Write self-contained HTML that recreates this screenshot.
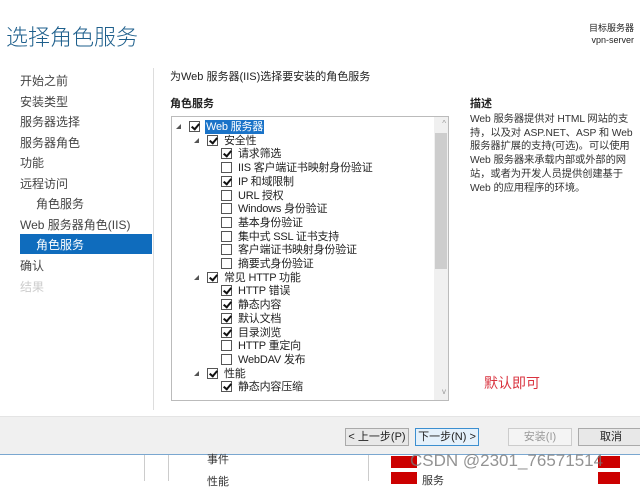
<!DOCTYPE html>
<html><head><meta charset="utf-8"><style>
*{margin:0;padding:0;box-sizing:border-box}
body{width:640px;height:481px;overflow:hidden;background:#fff;font-family:"Liberation Sans","Noto Sans CJK SC",sans-serif;font-size:11px;color:#333;position:relative}
.a{position:absolute;white-space:nowrap}
.nav{font-size:12px;color:#444}
.row{position:absolute;height:14px;line-height:14px;font-size:11px;color:#222;white-space:nowrap;letter-spacing:-0.2px}
.cb{position:absolute;width:11px;height:11px;border:1px solid #555;background:#fff;top:1px}
.cb.c::after{content:"";position:absolute;left:3px;top:0px;width:3px;height:6px;border:solid #111;border-width:0 2px 2px 0;transform:rotate(40deg)}
.ar{position:absolute;top:4px;width:0;height:0;border-left:5px solid transparent;border-bottom:5px solid #555}
.btn{position:absolute;height:18px;top:428px;border:1px solid #aaa;background:#e8e8e8;font-size:11px;text-align:center;line-height:16px;color:#222}
</style></head><body>
<div class="a" style="left:6px;top:20px;font-size:22px;color:#1e5f8c;font-weight:300">选择角色服务</div>
<div class="a" style="right:6px;top:22px;font-size:9px;color:#222;text-align:right;line-height:12px">目标服务器<br>vpn-server</div>

<div class="a nav" style="left:20px;top:72px">开始之前</div>
<div class="a nav" style="left:20px;top:93px">安装类型</div>
<div class="a nav" style="left:20px;top:113px">服务器选择</div>
<div class="a nav" style="left:20px;top:134px">服务器角色</div>
<div class="a nav" style="left:20px;top:154px">功能</div>
<div class="a nav" style="left:20px;top:175px">远程访问</div>
<div class="a nav" style="left:36px;top:195px">角色服务</div>
<div class="a nav" style="left:20px;top:216px">Web 服务器角色(IIS)</div>
<div class="a" style="left:20px;top:234px;width:132px;height:20px;background:#0f6cbd"></div>
<div class="a nav" style="left:36px;top:236px;color:#fff">角色服务</div>
<div class="a nav" style="left:20px;top:257px">确认</div>
<div class="a nav" style="left:20px;top:278px;color:#ccc">结果</div>
<div class="a" style="left:153px;top:68px;width:1px;height:342px;background:#ddd"></div>

<div class="a" style="left:170px;top:68px;font-size:11px;color:#222">为Web 服务器(IIS)选择要安装的角色服务</div>
<div class="a" style="left:170px;top:95px;font-size:11px;font-weight:bold;color:#222">角色服务</div>
<div class="a" style="left:470px;top:95px;font-size:11px;font-weight:bold;color:#222">描述</div>
<div class="a" style="left:470px;top:113px;font-size:10.3px;line-height:13.7px;color:#333;letter-spacing:-0.1px">Web 服务器提供对 HTML 网站的支<br>持，以及对 ASP.NET、ASP 和 Web<br>服务器扩展的支持(可选)。可以使用<br>Web 服务器来承载内部或外部的网<br>站，或者为开发人员提供创建基于<br>Web 的应用程序的环境。</div>

<div class="a" style="left:171px;top:116px;width:278px;height:285px;border:1px solid #bbb;background:#fff;overflow:hidden">
 <div class="a" style="right:0;top:0;width:14px;height:283px;background:#f0f0f0"></div>
 <div class="a" style="right:2px;top:2px;font-size:8px;color:#999">^</div>
 <div class="a" style="right:1px;top:16px;width:12px;height:136px;background:#cdcdcd"></div>
 <div class="a" style="right:2px;top:270px;font-size:8px;color:#999">v</div>
</div>
<div id="tree"></div>
<script>
var rows=[[0,1,1,"Web 服务器"],[1,1,1,"安全性"],[2,0,1,"请求筛选"],[2,0,0,"IIS 客户端证书映射身份验证"],[2,0,1,"IP 和域限制"],[2,0,0,"URL 授权"],[2,0,0,"Windows 身份验证"],[2,0,0,"基本身份验证"],[2,0,0,"集中式 SSL 证书支持"],[2,0,0,"客户端证书映射身份验证"],[2,0,0,"摘要式身份验证"],[1,1,1,"常见 HTTP 功能"],[2,0,1,"HTTP 错误"],[2,0,1,"静态内容"],[2,0,1,"默认文档"],[2,0,1,"目录浏览"],[2,0,0,"HTTP 重定向"],[2,0,0,"WebDAV 发布"],[1,1,1,"性能"],[2,0,1,"静态内容压缩"]];
var h="";
rows.forEach(function(r,i){var y=120+i*13.7;var x=[176,194,221][r[0]];
if(r[1])h+='<div class="ar" style="left:'+x+'px;top:'+(y+4)+'px;position:absolute"></div>';
var cx=x+13; if(r[0]==2)cx=x;
h+='<div class="cb'+(r[2]?' c':'')+'" style="left:'+cx+'px;top:'+(y+1)+'px"></div>';
var tx=cx+17;
if(i==0)h+='<div class="row" style="left:'+(tx-1)+'px;top:'+y+'px;background:#1a73c8;color:#fff;padding:0 1px">'+r[3]+'</div>';
else h+='<div class="row" style="left:'+tx+'px;top:'+y+'px">'+r[3]+'</div>';});
document.getElementById("tree").innerHTML=h;
</script>
<div class="a" style="left:484px;top:373px;font-size:14px;color:#d9333f">默认即可</div>

<div class="a" style="left:0;top:416px;width:640px;height:39px;background:#f0f0f0;border-top:1px solid #e4e4e4"></div>
<div class="btn" style="left:345px;width:64px">&lt; 上一步(P)</div>
<div class="btn" style="left:415px;width:64px;border-color:#3c8fd0;background:#e5f1fb">下一步(N) &gt;</div>
<div class="btn" style="left:508px;width:64px;background:#f4f4f4;border-color:#ccc;color:#999">安装(I)</div>
<div class="btn" style="left:578px;width:66px">取消</div>
<div class="a" style="left:0;top:454px;width:640px;height:1px;background:#7aa7d0"></div>
<div class="a" style="left:0;top:455px;width:640px;height:26px;background:#fff"></div>
<div class="a" style="left:144px;top:455px;width:1px;height:26px;background:#ccc"></div>
<div class="a" style="left:168px;top:455px;width:1px;height:26px;background:#ccc"></div>
<div class="a" style="left:368px;top:455px;width:1px;height:26px;background:#ccc"></div>
<div class="a" style="left:207px;top:451px;font-size:11px;color:#333">事件</div>
<div class="a" style="left:207px;top:473px;font-size:11px;color:#333">性能</div>
<div class="a" style="left:391px;top:456px;width:26px;height:12px;background:#c00"></div>
<div class="a" style="left:391px;top:472px;width:26px;height:12px;background:#c00"></div>
<div class="a" style="left:422px;top:472px;font-size:11px;color:#333">服务</div>
<div class="a" style="left:598px;top:456px;width:22px;height:12px;background:#c00"></div>
<div class="a" style="left:598px;top:472px;width:22px;height:12px;background:#c00"></div>
<div class="a" style="left:410px;top:451px;font-size:17px;color:rgba(120,120,120,0.8)">CSDN @2301_76571514</div>
</body></html>
